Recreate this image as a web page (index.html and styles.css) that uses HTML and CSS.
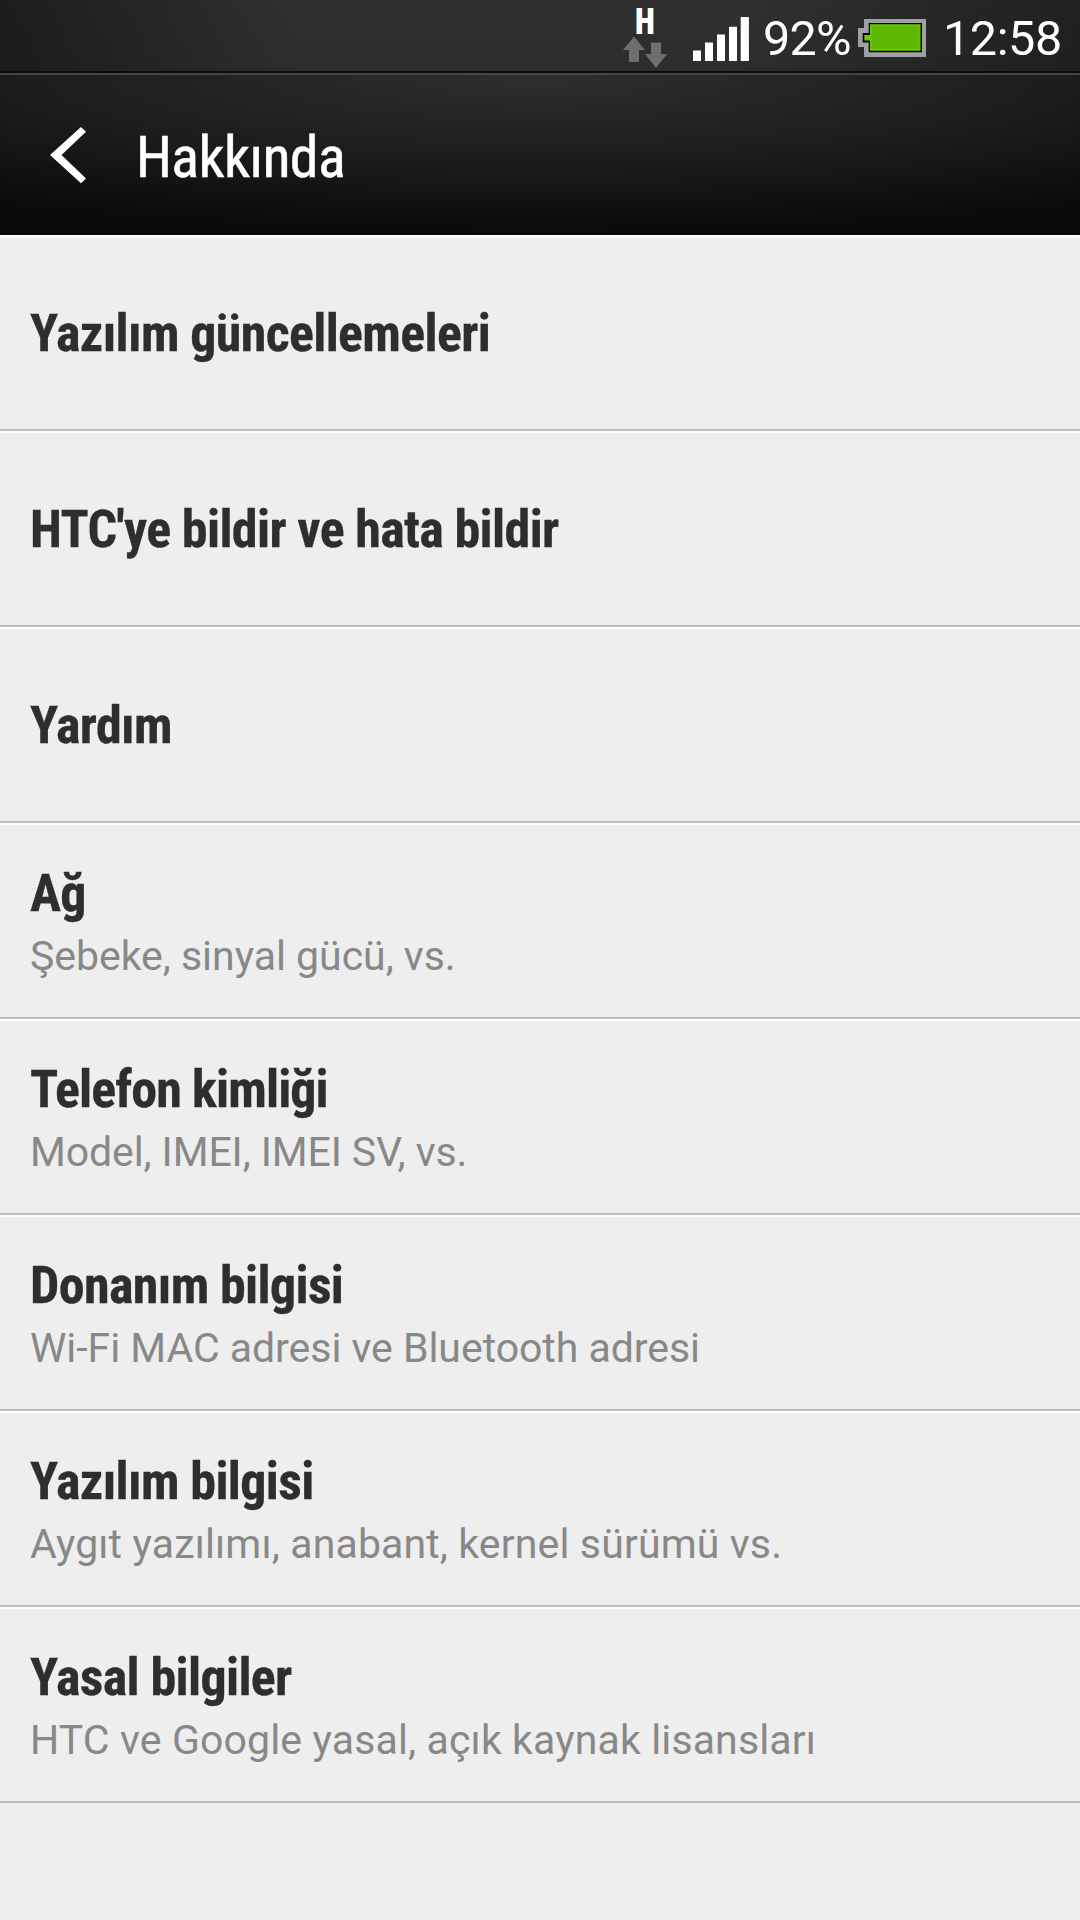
FILE: index.html
```html
<!DOCTYPE html>
<html lang="tr">
<head>
<meta charset="utf-8">
<title>Hakkında</title>
<link rel="stylesheet" href="styles.css">
</head>
<body>
<div class="top">
  <div class="status">
    <div class="network">
      <span class="network-type">H</span>
      <svg class="arrows" width="46" height="32" viewBox="622 36 46 32"><path d="M634 36.5 645 50H639V62H629V50H623ZM651 42.5H661V54H667L656 68 645 54H651Z" fill="#6f6f6f"/></svg>
    </div>
    <svg class="signal" width="56" height="44" viewBox="693 17.5 56 44"><path d="M693 51h8v10.5h-8zM705 43h8v18.5h-8zM717 35h8v26.5h-8zM729 27.3h8v34.2h-8zM740.7 17.5h8.2v44h-8.2z" fill="#fff"/></svg>
    <span class="percent">92%</span>
    <svg class="battery" width="68" height="38" viewBox="858 19 68 38"><path d="M864 19H926V57H864V47H858V28H864Z" fill="#a0a0a0"/><path d="M868.7 23H922V52.3H868.7V42.5H862.7V33H868.7Z" fill="#000"/><path d="M870 24.3H920.5V50.7H870V40.5H864.3V35H870Z" fill="#65cc00"/><path d="M871.5 26.3H919.5V49H871.5Z" fill="#5eb700"/></svg>
    <span class="clock">12:58</span>
  </div>
  <header class="header">
    <svg class="back" width="36" height="57" viewBox="50 127 36 57"><path d="M50 155 81 127 86 131.7 61.5 155 86 178.5 81 183.3Z" fill="#fff"/></svg>
    <h1 class="title">Hakkında</h1>
  </header>
</div>
<main class="list">
  <div class="row single"><div class="name">Yazılım güncellemeleri</div></div>
  <div class="row single"><div class="name">HTC'ye bildir ve hata bildir</div></div>
  <div class="row single"><div class="name">Yardım</div></div>
  <div class="row"><div class="name name-tight">Ağ</div><div class="note">Şebeke, sinyal gücü, vs.</div></div>
  <div class="row"><div class="name name-tight">Telefon kimliği</div><div class="note note-tight">Model, IMEI, IMEI SV, vs.</div></div>
  <div class="row"><div class="name">Donanım bilgisi</div><div class="note">Wi-Fi MAC adresi ve Bluetooth adresi</div></div>
  <div class="row"><div class="name">Yazılım bilgisi</div><div class="note note-wide">Aygıt yazılımı, anabant, kernel sürümü vs.</div></div>
  <div class="row"><div class="name">Yasal bilgiler</div><div class="note note-wide">HTC ve Google yasal, açık kaynak lisansları</div></div>
</main>
</body>
</html>
```
FILE: styles.css
```css
* { box-sizing: border-box; margin: 0; padding: 0; }
body { width: 1080px; min-height: 1920px; background: #eee; font-family: Roboto, "Noto Sans", sans-serif; }
svg { display: block; flex: none; }
.top { height: 235px; background: #181818; color: #fff; }
.status {
  display: flex; align-items: flex-start; justify-content: flex-end;
  height: 75px; padding-right: 19px;
  border-bottom: 2px solid #464646;
  background: linear-gradient(90deg, rgba(0,0,0,.4), transparent 28%, transparent 68%, rgba(0,0,0,.32)), linear-gradient(#303030, #2d2d2d);
  box-shadow: inset 0 -2px #0c0c0c;
  font-size: 48.5px; line-height: 56px; white-space: nowrap;
}
.network { display: flex; flex-direction: column; align-items: center; width: 46px; margin-right: 25px; }
.network-type { height: 36px; padding-top: 4px; font-size: 36px; line-height: 36px; font-weight: 900; font-stretch: 75%; transform: scaleX(.9); }
.signal { margin: 17px 14px 0 0; }
.percent { width: 88px; margin: 11px 7px 0 0; letter-spacing: -.8px; }
.battery { margin: 19px 17px 0 0; }
.clock { width: 118px; margin-top: 11px; letter-spacing: -.4px; }
.header {
  display: flex; align-items: center; gap: 50px;
  height: 160px; padding-left: 50px;
  background: radial-gradient(ellipse 980px 156px at 50% 0, #2e2e2e, #1e1e1e 50%, #090a0a);
}
.title { padding-top: 4px; font-size: 58px; line-height: 68px; font-weight: 400; font-stretch: 75%; letter-spacing: -.65px; -webkit-text-stroke: .5px #fff; }
.row {
  height: 196px; padding: 39px 30px 0;
  border-top: 2px solid #fff; border-bottom: 2px solid #bdbdbd;
}
.single { padding-top: 67px; }
.name { font-size: 52px; line-height: 60px; font-weight: 700; font-stretch: 75%; letter-spacing: -.65px; color: #2d2e30; -webkit-text-stroke: .3px #2d2e30; }
.name-tight { letter-spacing: -.9px; }
.note { margin-top: 4px; font-size: 41px; line-height: 56px; color: #888; letter-spacing: -.03px; }
.note-tight { letter-spacing: -.09px; }
.note-wide { letter-spacing: .14px; }
```
